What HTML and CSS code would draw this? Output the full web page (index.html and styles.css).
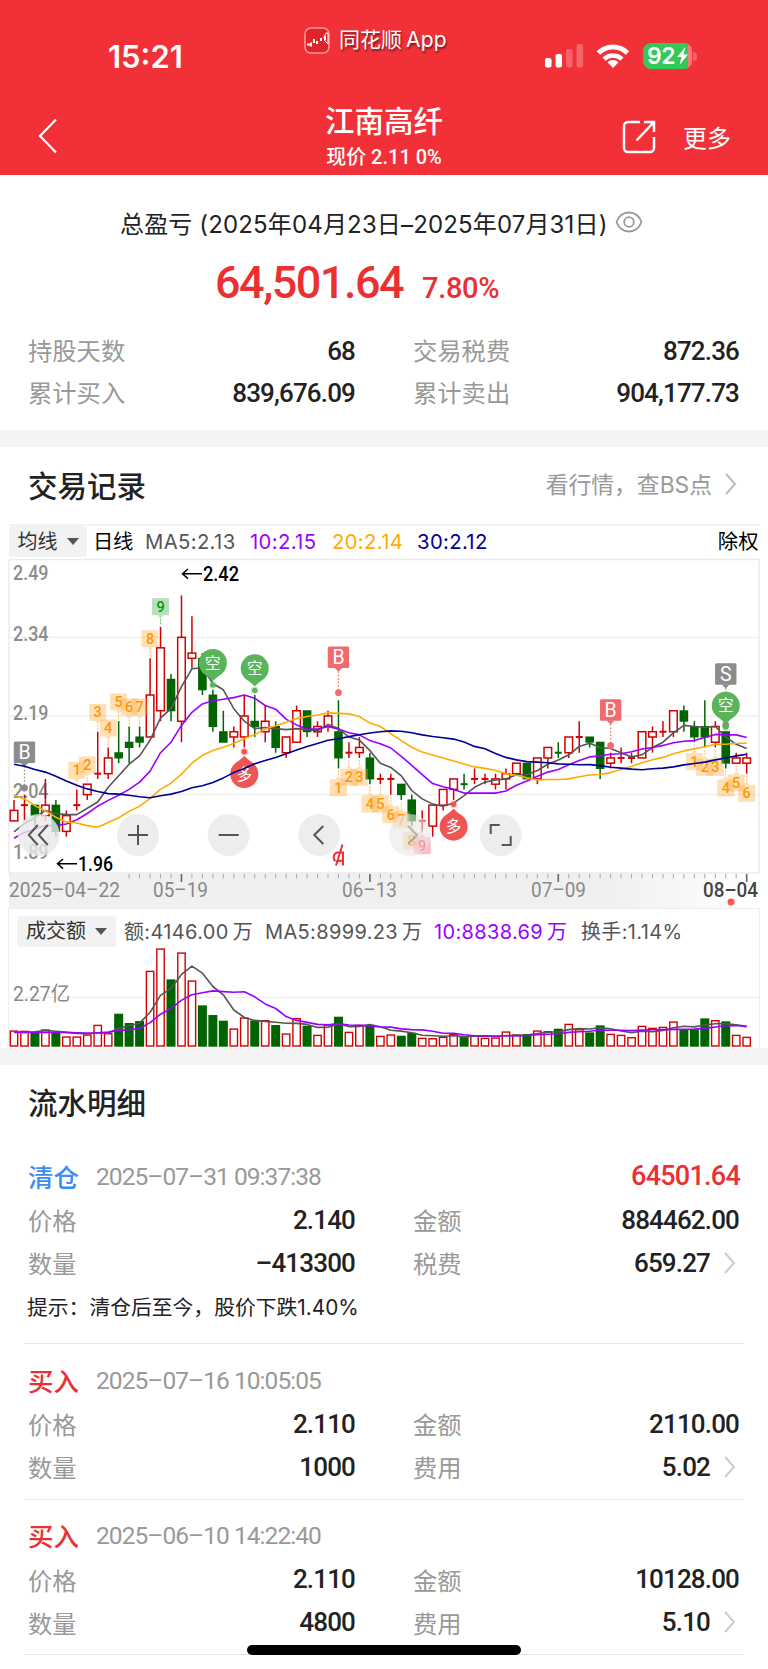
FILE: index.html
```html
<!DOCTYPE html>
<html lang="zh-CN">
<head>
  <meta charset="UTF-8" />
  <title>江南高纤</title>
  <link rel="stylesheet" href="styles.css">
</head>
<body>
  <header class="header">
    <div class="status">
      <span class="time">15:21</span>
      <div class="app-badge">
        <svg width="26" height="27" viewBox="0 0 26 27">
          <rect x="1" y="1" width="24" height="25" rx="6" fill="#e0242b" stroke="#ff9a9a" stroke-width="1.5"/>
          <path d="M3 17.500h3M7 15.500v4M10 12v4M13 14v3M17 11v3M21 9v4" stroke="#fff" stroke-width="2" fill="none"/>
          <path d="M20 10l2-4h2v11l-3-3z" fill="none" stroke="#fff"/>
        </svg>
        <span>同花顺<i>App</i></span>
      </div>
      <div class="signals">
        <svg width="38" height="26" viewBox="0 0 38 26">
          <rect x="0" y="15" width="6.500" height="9.500" rx="2" fill="#fff"/>
          <rect x="10.500" y="11" width="6.500" height="13.500" rx="2" fill="#fff"/>
          <rect x="21" y="6" width="6.500" height="18.500" rx="2" fill="#f66469"/>
          <rect x="31.500" y="1" width="6.500" height="23.500" rx="2" fill="#f66469"/>
        </svg>
        <svg class="wifi" width="34" height="26" viewBox="0 0 34 26">
          <path d="M2.500 10a20.500 20.500 0 0 1 29 0" fill="none" stroke="#fff" stroke-width="5"/>
          <path d="M8 16.200a13 13 0 0 1 18 0" fill="none" stroke="#fff" stroke-width="4.500"/>
          <path d="M17 25l-5.500-5.800a8 8 0 0 1 11 0z" fill="#fff"/>
        </svg>
        <div class="battery">
          <span>92</span>
          <svg width="11" height="18" viewBox="0 0 11 18"><path d="M8.500 0L0 10h4.500L2.500 18 11 7.500H6.500z" fill="#fff"/></svg>
        </div>
        <b class="nub"></b>
      </div>
    </div>
    <div class="nav">
      <svg class="back" width="20" height="36" viewBox="0 0 20 36"><path d="M18 1.500L2 18l16 16.500" fill="none" stroke="#fff" stroke-width="2.200"/></svg>
      <div class="stock">
        <h1>江南高纤</h1>
        <p>现价 2.11 0%</p>
      </div>
      <div class="nav-right">
        <svg width="34" height="34" viewBox="0 0 34 34" fill="none" stroke="#fff" stroke-width="2.500">
          <path d="M18 2H6a4 4 0 0 0-4 4v22a4 4 0 0 0 4 4h22a4 4 0 0 0 4-4V17"/>
          <path d="M22 2h10v10M31.500 2.500L14.500 20.500"/>
        </svg>
        <span>更多</span>
      </div>
    </div>
  </header>

  <section class="summary">
    <div class="period">
      <span>总盈亏 (2025年04月23日–2025年07月31日)</span>
      <svg width="28" height="22" viewBox="0 0 28 22" fill="none" stroke="#999" stroke-width="1.800">
        <path d="M1.500 11C4 4.500 8.500 1.500 14 1.500S24 4.500 26.500 11C24 17.500 19.500 20.500 14 20.500S4 17.500 1.500 11z"/>
        <circle cx="14" cy="11" r="4.800"/>
      </svg>
    </div>
    <div class="profit"><strong>64,501.64</strong><span>7.80%</span></div>
    <div class="pairs">
      <div class="pair"><span>持股天数</span><b>68</b></div>
      <div class="pair"><span>交易税费</span><b>872.36</b></div>
      <div class="pair"><span>累计买入</span><b>839,676.09</b></div>
      <div class="pair"><span>累计卖出</span><b>904,177.73</b></div>
    </div>
  </section>

  <section class="trades">
    <div class="section-head">
      <h2>交易记录</h2>
      <a class="more">看行情，查BS点
        <svg width="13" height="22" viewBox="0 0 13 22"><path d="M2 1l9 10-9 10" fill="none" stroke="#bbb" stroke-width="2"/></svg>
      </a>
    </div>
    <div class="legend">
      <span class="tab">均线<i class="caret"></i></span>
      <span class="daily">日线</span>
      <span class="ma5">MA5:2.13</span>
      <span class="ma10">10:2.15</span>
      <span class="ma20">20:2.14</span>
      <span class="ma30">30:2.12</span>
      <span class="adjust">除权</span>
    </div>
    <svg id="kline" width="768" height="350" viewBox="0 558 768 350"></svg>
    <div class="volume">
      <div class="volume-legend">
        <span class="tab">成交额<i class="caret"></i></span>
        <span class="amount">额:4146.00<em>万</em></span>
        <span class="vol5">MA5:8999.23<em>万</em></span>
        <span class="vol10">10:8838.69<em>万</em></span>
        <span class="turnover">换手:1.14%</span>
      </div>
      <svg id="bars" width="768" height="102" viewBox="0 946 768 102"></svg>
    </div>
  </section>

  <section class="flow">
    <h2>流水明细</h2>

    <article class="record">
      <div class="record-head"><span class="tag sell">清仓</span><time>2025–07–31 09:37:38</time><b class="gain">64501.64</b></div>
      <div class="pairs">
        <div class="pair"><span>价格</span><b>2.140</b></div>
        <div class="pair"><span>金额</span><b>884462.00</b></div>
        <div class="pair"><span>数量</span><b>–413300</b></div>
        <div class="pair"><span>税费</span><b>659.27</b><svg width="13" height="22" viewBox="0 0 13 22"><path d="M2 1l9 10-9 10" fill="none" stroke="#ccc" stroke-width="2"/></svg></div>
      </div>
      <p class="hint">提示：清仓后至今，股价下跌1.40%</p>
    </article>

    <article class="record">
      <div class="record-head"><span class="tag buy">买入</span><time>2025–07–16 10:05:05</time></div>
      <div class="pairs">
        <div class="pair"><span>价格</span><b>2.110</b></div>
        <div class="pair"><span>金额</span><b>2110.00</b></div>
        <div class="pair"><span>数量</span><b>1000</b></div>
        <div class="pair"><span>费用</span><b>5.02</b><svg width="13" height="22" viewBox="0 0 13 22"><path d="M2 1l9 10-9 10" fill="none" stroke="#ccc" stroke-width="2"/></svg></div>
      </div>
    </article>

    <article class="record">
      <div class="record-head"><span class="tag buy">买入</span><time>2025–06–10 14:22:40</time></div>
      <div class="pairs">
        <div class="pair"><span>价格</span><b>2.110</b></div>
        <div class="pair"><span>金额</span><b>10128.00</b></div>
        <div class="pair"><span>数量</span><b>4800</b></div>
        <div class="pair"><span>费用</span><b>5.10</b><svg width="13" height="22" viewBox="0 0 13 22"><path d="M2 1l9 10-9 10" fill="none" stroke="#ccc" stroke-width="2"/></svg></div>
      </div>
    </article>
  </section>
  <div class="home-bar"></div>

  <script src="chart.js"></script>
</body>
</html>
```
FILE: styles.css
```css
* {
  box-sizing: border-box;
}
body {
  margin: 0;
  width: 768px;
  height: 1669px;
  overflow: hidden;
  position: relative;
  background: #fff;
  color: #222;
  font-family: Inter, "Noto Sans CJK SC", sans-serif;
}
h1, h2, p {
  margin: 0;
}
i, em {
  font-style: normal;
}

/* header */
.header {
  height: 175px;
  background: #f23038;
  color: #fff;
}
.status {
  display: grid;
  grid-template-columns: 304px 241px 1fr;
  height: 92px;
}
.time {
  padding: 38px 0 0 108px;
  font-size: 31px;
  line-height: 38px;
  font-weight: 600;
}
.app-badge {
  display: flex;
  align-items: center;
  gap: 9px;
  height: 32px;
  margin-top: 24px;
  font-size: 21px;
  white-space: nowrap;
  text-shadow: 1px 2px 2px rgba(0,0,0,0.5);
}
.app-badge span {
  padding-bottom: 4px;
}
.app-badge i {
  margin-left: 4px;
  letter-spacing: 0.2px;
}
.signals {
  display: flex;
  align-items: center;
  height: 26px;
  margin-top: 43px;
}
.wifi {
  margin-left: 13px;
}
.battery {
  display: flex;
  align-items: center;
  gap: 1px;
  width: 49px;
  height: 26px;
  margin-left: 13px;
  padding-left: 4px;
  border-radius: 8px;
  background: linear-gradient(90deg, #34c759 45px, #f4787c 45px);
}
.battery span {
  width: 29px;
  font-size: 23px;
  font-weight: 600;
  line-height: 26px;
  letter-spacing: -0.5px;
}
.nub {
  width: 4px;
  height: 9px;
  margin-left: 1px;
  border-radius: 0 4px 4px 0;
  background: #f66469;
}
.nav {
  display: grid;
  grid-template-columns: 284px 200px 1fr;
  height: 83px;
}
.back {
  margin: 26px 0 0 38px;
}
.stock {
  text-align: center;
}
.stock h1 {
  padding-top: 9px;
  font-size: 29.5px;
  font-weight: 500;
  line-height: 40px;
}
.stock p {
  font-family: Roboto, "Noto Sans CJK SC", sans-serif;
  font-size: 20px;
  font-weight: 500;
  line-height: 32px;
}
.nav-right {
  display: flex;
  align-items: center;
  height: 90px;
  padding-left: 138px;
  font-size: 24px;
}
.nav-right svg {
  flex: none;
}
.nav-right span {
  margin-left: 27px;
  padding-bottom: 2px;
  white-space: nowrap;
}

/* profit summary */
.summary {
  height: 255px;
  padding-top: 29px;
}
.period {
  display: flex;
  align-items: center;
  height: 36px;
  padding-left: 120px;
  font-size: 24px;
  letter-spacing: 0.15px;
  white-space: nowrap;
}
.period span {
  width: 495px;
}
.profit {
  display: flex;
  align-items: baseline;
  height: 82px;
  padding-left: 215px;
  color: #ea3032;
  font-family: Roboto, sans-serif;
  line-height: 86px;
}
.profit strong {
  width: 207px;
  font-size: 45px;
  font-weight: 500;
  letter-spacing: -1.5px;
}
.profit span {
  font-size: 29px;
  font-weight: 500;
  letter-spacing: -0.3px;
}
.pairs {
  display: grid;
  grid-template-columns: 327px 326px;
  column-gap: 58px;
  padding-left: 28px;
}
.summary .pairs {
  padding-top: 8px;
}
.pair {
  display: flex;
  align-items: center;
  height: 42px;
}
.pair span {
  color: #999;
  font-size: 24.3px;
}
.summary .pair span {
  padding-bottom: 3px;
}
.pair b {
  margin-left: auto;
  font-family: Roboto, sans-serif;
  font-size: 26px;
  font-weight: 500;
  letter-spacing: -0.85px;
}
.pair svg {
  margin: 0 3px 0 13px;
}

/* chart */
.trades {
  border-top: 17px solid #f4f4f4;
}
.section-head {
  display: flex;
  justify-content: space-between;
  align-items: center;
  height: 77px;
  padding: 0 31px 4px 28px;
}
h2 {
  font-size: 29.5px;
  font-weight: 500;
}
.more {
  display: flex;
  align-items: center;
  gap: 12px;
  color: #999;
  font-size: 22.8px;
}
.legend {
  display: grid;
  grid-template-columns: 84px 52px 105px 82px 85px 1fr auto;
  height: 34px;
  margin: 0 9px 0 9px;
  border-top: 2px solid #f2f2f2;
  font-size: 20.3px;
  letter-spacing: 0.35px;
  line-height: 32px;
}
.tab {
  display: flex;
  align-items: center;
  justify-content: center;
  gap: 9px;
  width: 78px;
  height: 31px;
  border-radius: 3px;
  background: #f2f2f2;
  font-size: 20px;
  letter-spacing: 0;
  color: #333;
}
.caret {
  border: 6px solid transparent;
  border-top: 7px solid #555;
  border-bottom: 0;
}
.daily, .adjust {
  color: #000;
}
.daily {
  letter-spacing: -0.4px;
}
.ma5, .amount, .vol5, .turnover {
  color: #555;
}
.ma10, .vol10 {
  color: #9a00ff;
}
.ma20 {
  color: #ffab00;
}
.ma30 {
  color: #000096;
}
#kline, #bars {
  display: block;
}
.volume {
  height: 140px;
}
.volume-legend {
  display: grid;
  grid-template-columns: 107px 141px 169px 147px 1fr;
  height: 38px;
  margin: 0 8px 0 8px;
  padding: 7px 0 0 8px;
  border: 1px solid #eee;
  border-bottom: 0;
  font-size: 20px;
  letter-spacing: 0.35px;
  line-height: 33px;
  white-space: nowrap;
}
.volume-legend .tab {
  width: 99px;
}
.volume-legend em {
  margin-left: 4px;
}
#kline text, #bars text {
  font-family: Roboto, "Noto Sans CJK SC", sans-serif;
}

/* flow records */
.flow {
  border-top: 17px solid #f4f4f4;
}
.flow h2 {
  height: 85px;
  padding: 0 28px;
  line-height: 77px;
}
.record {
  height: 155.5px;
  margin: 0 24px;
  padding-top: 14px;
  border-bottom: 1px solid #e6e6e6;
}
.record:first-of-type {
  height: 194px;
  padding-top: 4px;
}
.record .pairs {
  padding-left: 4px;
}
.record .pair {
  height: 43px;
}
.record-head {
  display: flex;
  align-items: center;
  height: 44px;
  padding: 0 4px;
}
.tag {
  width: 68px;
  padding-bottom: 2px;
  font-size: 25.5px;
  font-weight: 500;
}
.sell {
  color: #3c8df0;
}
.buy {
  color: #ea3032;
}
time {
  color: #999;
  font-family: Roboto, sans-serif;
  font-size: 24.5px;
  letter-spacing: -0.95px;
}
.gain {
  margin-left: auto;
  color: #ea3032;
  font-family: Roboto, sans-serif;
  font-size: 27px;
  font-weight: 500;
  letter-spacing: -0.75px;
}
.hint {
  padding-left: 3px;
  font-size: 20.8px;
  line-height: 48px;
}
.home-bar {
  position: absolute;
  left: 247px;
  top: 1645px;
  width: 274px;
  height: 10px;
  border-radius: 5px;
  background: #000;
}
```
FILE: chart.js
```js
const RED = '#d20000', GREEN = '#006400';
const STEP = 10.467, X0 = 14;

// close, open, high, low
const candles = [
  [2.01,1.99,2.03,1.99],[2.02,2.02,2.04,1.99],[2.00,2.02,2.02,1.98],[2.02,2.00,2.07,1.99],[1.97,2.02,2.03,1.96],
  [2.00,1.97,2.01,1.96],[2.02,2.02,2.05,2.01],[2.06,2.04,2.06,2.03],[2.08,2.08,2.16,2.07],[2.11,2.08,2.13,2.07],
  [2.11,2.12,2.18,2.10],[2.13,2.14,2.17,2.10],[2.14,2.15,2.17,2.13],[2.23,2.15,2.30,2.15],[2.32,2.20,2.36,2.18],
  [2.20,2.26,2.27,2.18],[2.34,2.18,2.42,2.14],[2.31,2.30,2.38,2.28],[2.24,2.30,2.31,2.23],[2.17,2.23,2.24,2.16],
  [2.14,2.16,2.20,2.14],[2.16,2.15,2.17,2.13],[2.19,2.15,2.23,2.13],[2.17,2.18,2.23,2.15],[2.18,2.16,2.21,2.14],
  [2.13,2.17,2.18,2.12],[2.15,2.12,2.15,2.11],[2.20,2.14,2.21,2.14],[2.16,2.20,2.20,2.15],[2.17,2.16,2.18,2.15],
  [2.19,2.17,2.20,2.16],[2.11,2.16,2.22,2.09],[2.12,2.12,2.14,2.11],[2.13,2.12,2.15,2.11],[2.07,2.11,2.12,2.06],
  [2.07,2.07,2.08,2.06],[2.07,2.07,2.08,2.04],[2.04,2.06,2.06,2.03],[1.99,2.03,2.04,1.98],[1.99,1.99,2.01,1.97],
  [2.02,1.98,2.02,1.96],[2.05,2.02,2.05,2.01],[2.07,2.05,2.07,2.03],[2.06,2.06,2.08,2.05,1],[2.07,2.07,2.09,2.06],
  [2.07,2.07,2.08,2.06],[2.07,2.06,2.08,2.05],[2.08,2.07,2.09,2.05],[2.10,2.08,2.10,2.08],[2.07,2.10,2.10,2.07],
  [2.11,2.07,2.11,2.06],[2.13,2.11,2.13,2.09],[2.12,2.12,2.14,2.11,1],[2.15,2.12,2.15,2.11],[2.15,2.15,2.18,2.12],
  [2.14,2.15,2.15,2.13],[2.09,2.14,2.14,2.07],[2.11,2.10,2.12,2.09],[2.11,2.11,2.13,2.10],[2.11,2.11,2.12,2.10],
  [2.16,2.11,2.16,2.11],[2.16,2.15,2.17,2.12],[2.16,2.16,2.18,2.15],[2.20,2.16,2.20,2.15],[2.18,2.20,2.21,2.16],
  [2.15,2.17,2.18,2.14],[2.15,2.17,2.22,2.13],[2.17,2.14,2.18,2.13],[2.10,2.16,2.16,2.09],[2.11,2.10,2.12,2.10],
  [2.11,2.10,2.12,2.08]
];
const volumes = [
  49,48,42,52,42,31,31,37,66,41,99,71,77,228,295,202,283,199,124,95,78,55,88,79,80,65,40,86,63,36,67,90,45,66,65,
  33,37,33,42,27,26,30,39,29,35,27,28,46,37,38,49,47,54,69,53,43,64,39,36,29,63,57,60,76,52,52,85,80,76,36,30
];

const x = i => X0 + i * STEP;
const y = p => 716 + (2.19 - p) * 524.4;
const vy = v => 1046.7 - v / 3;

const line = (x1, y1, x2, y2, color, w = 1.5, extra = '') =>
  `<line x1="${x1}" y1="${y1}" x2="${x2}" y2="${y2}" stroke="${color}" stroke-width="${w}" ${extra}/>`;
const text = (tx, ty, s, size, color, len, extra = '') =>
  `<text x="${tx}" y="${ty}" font-size="${size}" fill="${color}" ${len ? `textLength="${len}" lengthAdjust="spacingAndGlyphs"` : ''} ${extra}>${s}</text>`;

// first values come from history before the visible window
function average(data, n, start) {
  return data.map((_, i) => i < start.length
    ? start[i]
    : data.slice(i - n + 1, i + 1).reduce((a, b) => a + b, 0) / n);
}
const curve = (values, fy, color) =>
  `<polyline points="${values.map((v, i) => `${x(i).toFixed(1)},${fy(v).toFixed(1)}`).join(' ')}" fill="none" stroke="${color}" stroke-width="1.6" stroke-linejoin="round"/>`;

function drawCandle([close, open, high, low, down], i) {
  const cx = x(i), color = close < open || down ? GREEN : RED;
  const top = y(Math.max(open, close)), bottom = y(Math.min(open, close));
  if (open === close) {
    return line(cx, y(high), cx, y(low), color) + line(cx - 3.5, top, cx + 3.5, top, color, 2);
  }
  return line(cx, y(high), cx, top, color) + line(cx, bottom, cx, y(low), color) +
    (color === GREEN
      ? `<rect x="${cx - 4.3}" y="${top - .5}" width="8.600" height="${bottom - top + 1}" fill="${GREEN}"/>`
      : `<rect x="${cx - 3.8}" y="${top}" width="7.600" height="${bottom - top}" fill="#fff" stroke="${RED}" stroke-width="1.5"/>`);
}

// numbered square, dir 1 = pointer down, -1 = pointer up
function badge(i, cropY, n, dir, bg = '#ffab40', fg = '#ff9800') {
  const cx = x(i), cy = 520 + cropY / 3, e = cy + dir * 8.5;
  return `<g><path d="M${cx - 8.5} ${cy - 8.5}h17v17h-17z" fill="${bg}" opacity=".38"/>` +
    `<path d="M${cx - 3} ${e}h6l-3 ${dir * 3.5}z" fill="${bg}" opacity=".38"/>` +
    line(cx, e + dir * 4, cx, e + dir * 10, bg, 1, 'stroke-dasharray="2 1" opacity=".8"') +
    text(cx, cy + 5, n, 14.5, fg, 0, 'text-anchor="middle" font-weight="500"') + '</g>';
}
function flag(i, cy, dotY, s, color) {
  const cx = x(i);
  return `<rect x="${cx - 10.7}" y="${cy - 10.7}" width="21.400" height="21.400" rx="1.500" fill="${color}"/>` +
    `<path d="M${cx - 4} ${cy + 10.5}h8l-4 4z" fill="${color}"/>` +
    line(cx, cy + 14, cx, dotY, color, 1.3, 'stroke-dasharray="1.5 2"') +
    `<circle cx="${cx}" cy="${dotY}" r="3.400" fill="${color}"/>` +
    text(cx, cy + 6.9, s, 19.5, '#fff', 0, 'text-anchor="middle"');
}
function pin(i, cy, dotY, s, color, dir) {
  const cx = x(i);
  return `<circle cx="${cx}" cy="${cy}" r="14" fill="${color}"/>` +
    `<path d="M${cx - 8} ${cy + dir * 11}h16l-8 ${dir * 7}z" fill="${color}"/>` +
    `<circle cx="${cx}" cy="${dotY}" r="4" fill="${color}" opacity=".3"/><circle cx="${cx}" cy="${dotY}" r="2.600" fill="${color}"/>` +
    text(cx, cy + 5.5, s, 15.5, '#fff', 0, 'text-anchor="middle"');
}
function control(cx, d, faded) {
  return `<g><circle cx="${cx}" cy="835" r="21" fill="#e8e8e8" opacity="${faded ? .6 : .8}"/>` +
    `<path d="${d}" transform="translate(${cx} 835)" fill="none" stroke="#555" stroke-width="2" opacity="${faded ? .35 : 1}"/></g>`;
}

const closes = candles.map(c => c[0]);
let out = `<defs><linearGradient id="axis"><stop offset="0" stop-color="#f0f0f0"/><stop offset=".8" stop-color="#f0f0f0"/><stop offset="1" stop-color="#fff"/></linearGradient></defs>
  <rect x="9" y="873" width="750" height="35" fill="url(#axis)"/>
  <rect x="9" y="559.500" width="750" height="313.500" fill="#fff" stroke="#ebebeb" stroke-width="1.500"/>`;
[637.3, 716, 794.7].forEach(gy => { out += line(9, gy, 759, gy, '#eee', 1.3); });
[['2.49', 580], ['2.34', 641], ['2.19', 719.5], ['2.04', 798], ['1.89', 859]].forEach(([s, ty]) => {
  out += text(13, ty, s, 21, '#8c8c8c', 35.5, 'font-weight="500"');
});
out += candles.map(drawCandle).join('');
out += curve(average(closes, 5, [1.969,1.985,1.996,2.010]), y, '#555');
out += curve(average(closes, 10, [1.957,1.968,1.974,1.981,1.981,1.984,1.992,2.004,2.018]), y, '#9a00ff');
out += curve(average(closes, 20, [2.039,2.032,2.019,2.009,1.997,1.988,1.986,1.981,1.978,1.987,1.996,2.008,2.018,2.033,2.050,2.062,2.079,2.100,2.115]), y, '#ffab00');

[[6,751],[7,735],[8,577],[9,624],[10,546],[11,561],[12,561],[13,356]].forEach(([i, by], k) => { out += badge(i, by, k + 1, 1); });
out += badge(14, 260, 9, 1, '#3fae49', '#009a00');
[[31,803],[32,772],[33,772],[34,852],[35,852],[36,884],[37,900],[38,963]].forEach(([i, by], k) => { out += badge(i, by, k + 1, -1); });
out += badge(39, 977, 9, -1, '#ff5060', '#ee3040');
[[65,725],[66,742],[67,742],[68,804],[69,789],[70,820]].forEach(([i, by], k) => { out += badge(i, by, k + 1, -1); });

out += flag(1, 752.3, 788, 'B', '#8c8c8c') + flag(31, 657.3, 692.7, 'B', '#f06a6e') + flag(57, 710, 745.7, 'B', '#f06a6e') + flag(68, 674, 725, 'S', '#8c8c8c');
out += pin(19, 663, 685, '空', '#5ab55a', 1) + pin(23, 668.3, 690.3, '空', '#5ab55a', 1) + pin(68, 705.7, 727, '空', '#5ab55a', 1);
out += pin(22, 774, 751.7, '多', '#ee5555', -1) + pin(42, 826.7, 804.3, '多', '#ee5555', -1);
out += curve(average(closes, 30, [2.098,2.094,2.088,2.083,2.075,2.066,2.058,2.051,2.046,2.042,2.041,2.039,2.036,2.034,2.038,2.041,2.046,2.053,2.057,2.063,2.072,2.082,2.090,2.099,2.105,2.111,2.118,2.125,2.132]), y, '#000096');

out += control(38.8, 'M-1 -10l-9 10 9 10M9 -10l-9 10 9 10') + control(138, 'M-10 0h20M0 -10v20') + control(228.7, 'M-10 0h20') +
  control(319.3, 'M4 -9l-9 9 9 9') + control(410, 'M-2 -9l9 9-9 9', true) + control(500.7, 'M-10 -1v-9h9M10 1v9h-9');

const arrow = 'fill="none" stroke="#000" stroke-width="1.500"';
out += `<path d="M202 573.800h-19M188 569l-5.500 4.800 5.500 4.800" ${arrow}/>` + text(203, 581, '2.42', 20.5, '#000', 36, 'font-weight="500"');
out += `<path d="M77 863.800h-19M63 859l-5.500 4.800 5.500 4.800" ${arrow}/>` + text(78, 871, '1.96', 20.5, '#000', 35, 'font-weight="500"');
out += '<path d="M342.500 844.500l-6.500 21M335.500 861c-3-2-2-7.500 1.500-8.500h6v13M336 861.500l6-1" fill="none" stroke="#ee3030" stroke-width="2"/>';

for (let i = 11; i < 71; i++) {
  const major = [16, 34, 52, 70].includes(i);
  out += line(x(i), 874, x(i), major ? 882 : 878.5, major ? '#666' : '#aaa', major ? 1.6 : 1);
}
out += text(9, 897, '2025–04–22', 20.5, '#888', 111) + text(153, 897, '05–19', 20.5, '#888', 55) + text(342, 897, '06–13', 20.5, '#888', 55) +
  text(531, 897, '07–09', 20.5, '#888', 55) + text(703, 897, '08–04', 20.5, '#444', 55, 'font-weight="500"');
out += '<circle cx="731" cy="902" r="3.500" fill="#f55"/>';
document.getElementById('kline').innerHTML = out;

// turnover bars
let bars = line(9, 997.3, 759, 997.3, '#eee', 1.3) + line(8.5, 946, 8.5, 1048, '#eee', 1) + line(759.5, 946, 759.5, 1048, '#eee', 1);
bars += text(13, 1000.5, '2.27亿', 20.5, '#888', 57);
volumes.forEach((v, i) => {
  const [close, open, , , down] = candles[i];
  bars += close < open || down
    ? `<rect x="${x(i) - 4.5}" y="${vy(v)}" width="9" height="${v / 3}" fill="${GREEN}"/>`
    : `<rect x="${x(i) - 3.7}" y="${vy(v) + .7}" width="7.400" height="${v / 3 - 1.4}" fill="#fff" stroke="${RED}" stroke-width="1.4"/>`;
});
bars += curve(average(volumes, 5, [44,43,45,49]), vy, '#555') + curve(average(volumes, 10, [43,43,43,43,43,43,42,41,42]), vy, '#9a00ff');
document.getElementById('bars').innerHTML = bars;
```
